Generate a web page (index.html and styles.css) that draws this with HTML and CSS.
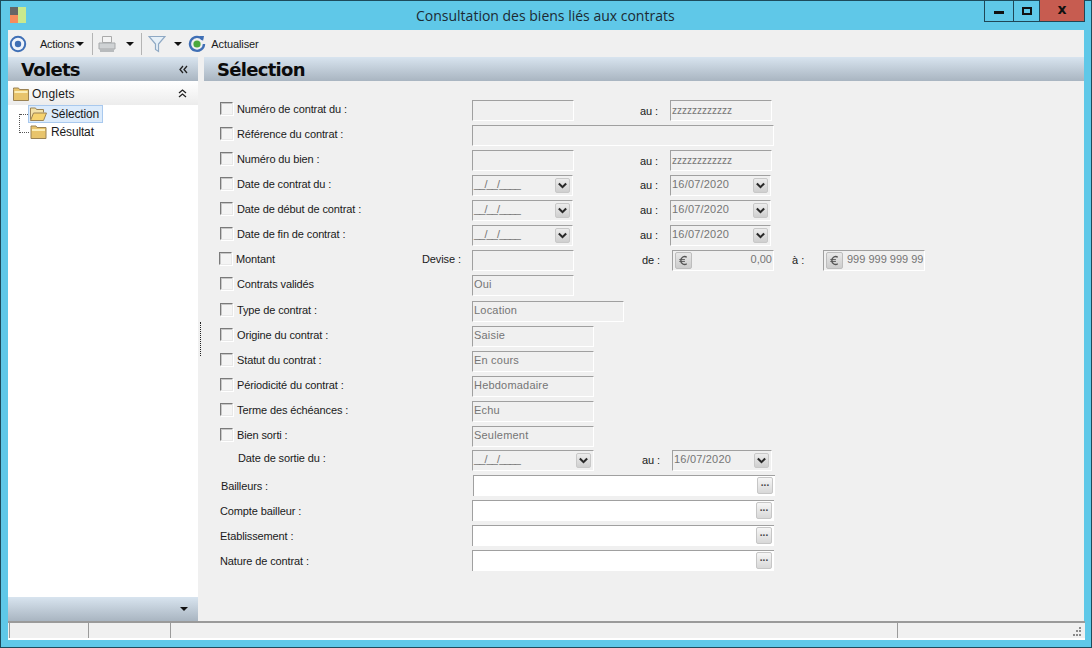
FILE: index.html
```html
<!DOCTYPE html>
<html lang="fr">
<head>
<meta charset="utf-8">
<title>Consultation des biens liés aux contrats</title>
<link rel="stylesheet" href="styles.css">
</head>
<body>
<svg class="defs" width="0" height="0">
  <symbol id="chev" viewBox="0 0 16 16"><path d="M3.500 5.500L8 10l4.500-4.500" fill="none" stroke="#2a2a2a" stroke-width="2.600"/></symbol>
  <symbol id="euro" viewBox="0 0 16 16"><path d="M11.500 4.500A4 4 0 0 0 5.200 8a4 4 0 0 0 6.300 3.500" fill="none" stroke="#555" stroke-width="1.500"/><path d="M3.500 7h6M3.500 9h6" stroke="#555"/></symbol>
  <symbol id="folder" viewBox="0 0 16 14"><path d="M.5 2.500V1h5l1 1.500h9v11H.5z" fill="#e8c46c" stroke="#9a8254"/><path d="M1.500 4h13v2h-13z" fill="#fbeeb8"/></symbol>
  <symbol id="folder-open" viewBox="0 0 17 14"><path d="M.5 12.500V1h5l1 1.500h7v3" fill="#f3e2a8" stroke="#9a8254"/><path d="M.5 13.500l3-7.500h13l-3 7.500z" fill="#f6d36f" stroke="#9a8254"/></symbol>
</svg>
<div class="window">
  <header class="titlebar">
    <div class="appicon"><span class="ic-grey"></span><span class="ic-orange"></span><span class="ic-green"></span></div>
    <div class="title">Consultation des biens liés aux contrats</div>
    <div class="winbtns">
      <div class="winbtn min"><i></i></div>
      <div class="winbtn max"><i></i></div>
      <div class="winbtn close">x</div>
    </div>
  </header>
  <div class="client">
    <div class="toolbar">
      <svg class="tb-target" width="18" height="18" viewBox="0 0 18 18"><circle cx="9" cy="9" r="7.200" fill="#eef3fb" stroke="#3f6fb5" stroke-width="2"/><circle cx="9" cy="9" r="3.200" fill="#3f6fb5"/></svg>
      <span class="tb-text actions">Actions</span><span class="arrow arrow-a"></span>
      <span class="sep sep-a"></span>
      <svg class="tb-print" width="18" height="18" viewBox="0 0 18 18"><path d="M4.500 1.500h9v6h-9z" fill="#f4f4f4" stroke="#aaa"/><path d="M1 8h16v6H1z" fill="#cfd2d4" stroke="#a6a9ab"/><path d="M2 14h14v3H2z" fill="#b8bbbd"/></svg>
      <span class="arrow arrow-b"></span>
      <span class="sep sep-b"></span>
      <svg class="tb-filter" width="18" height="18" viewBox="0 0 18 18"><path d="M1 1.500h16l-6.500 7.500v7.500l-3-2V9z" fill="#e6f0f8" stroke="#8fa9c4" stroke-width="1.200"/></svg>
      <span class="arrow arrow-c"></span>
      <svg class="tb-refresh" width="18" height="18" viewBox="0 0 18 18"><path d="M14.500 4.500A7 7 0 1 0 16 9" fill="none" stroke="#3f6fb5" stroke-width="2.400"/><path d="M11 1l5 0-1 5z" fill="#3f6fb5"/><circle cx="9" cy="9" r="3.600" fill="#4aa83c"/></svg>
      <span class="tb-text refresh">Actualiser</span>
    </div>
    <div class="main">
      <aside class="side">
        <div class="side-head"><span class="h-title">Volets</span><svg class="dbl" width="9" height="9" viewBox="0 0 9 9"><path d="M4 1L1 4.500 4 8M8 1L5 4.500 8 8" fill="none" stroke="#222" stroke-width="1.300"/></svg></div>
        <div class="onglets">
          <svg class="fold-o" width="16" height="14"><use href="#folder"/></svg>
          <span class="on-label">Onglets</span>
          <svg class="dbl-up" width="9" height="9" viewBox="0 0 9 9"><path d="M1 4l3.500-3L8 4M1 8l3.500-3L8 8" fill="none" stroke="#222" stroke-width="1.300"/></svg>
        </div>
        <div class="tree">
          <div class="tree-lines"></div>
          <div class="tree-item selected"><svg width="17" height="14"><use href="#folder-open"/></svg><span>Sélection</span></div>
          <div class="tree-item second"><svg width="17" height="14"><use href="#folder"/></svg><span>Résultat</span></div>
        </div>
        <div class="side-foot"><span class="foot-arrow"></span></div>
      </aside>
      <div class="splitter"><span class="grip"></span></div>
      <section class="content">
        <div class="c-head"><span class="h-title">Sélection</span></div>
        <form class="form">
          <div class="row"><span class="cb"></span><label class="lbl">Numéro de contrat du :</label><span class="f w102"></span><span class="au">au :</span><span class="f w102 val tiny">zzzzzzzzzzzz</span></div>
          <div class="row"><span class="cb"></span><label class="lbl">Référence du contrat :</label><span class="f w302"></span></div>
          <div class="row"><span class="cb"></span><label class="lbl">Numéro du bien :</label><span class="f w102"></span><span class="au">au :</span><span class="f w102 val tiny">zzzzzzzzzzzz</span></div>
          <div class="row"><span class="cb"></span><label class="lbl">Date de contrat du :</label><span class="f w101 val"><span class="mask">__/__/____</span><svg class="dd"><use href="#chev"/></svg></span><span class="au">au :</span><span class="f w101 val">16/07/2020<svg class="dd"><use href="#chev"/></svg></span></div>
          <div class="row"><span class="cb"></span><label class="lbl">Date de début de contrat :</label><span class="f w101 val"><span class="mask">__/__/____</span><svg class="dd"><use href="#chev"/></svg></span><span class="au">au :</span><span class="f w101 val">16/07/2020<svg class="dd"><use href="#chev"/></svg></span></div>
          <div class="row"><span class="cb"></span><label class="lbl">Date de fin de contrat :</label><span class="f w101 val"><span class="mask">__/__/____</span><svg class="dd"><use href="#chev"/></svg></span><span class="au">au :</span><span class="f w101 val">16/07/2020<svg class="dd"><use href="#chev"/></svg></span></div>
          <div class="row"><span class="cb cb-m"></span><label class="lbl short">Montant</label><label class="devise">Devise :</label><span class="f w102"></span><span class="au de">de :</span><span class="f w102 val money"><svg class="eu"><use href="#euro"/></svg><span class="amt">0,00</span></span><span class="a-lbl">à :</span><span class="f w102 val money"><svg class="eu"><use href="#euro"/></svg><span class="amt">999 999 999 99</span></span></div>
          <div class="row"><span class="cb"></span><label class="lbl">Contrats validés</label><span class="f w102 val">Oui</span></div>
          <div class="row gap"><span class="cb"></span><label class="lbl">Type de contrat :</label><span class="f w152 val">Location</span></div>
          <div class="row"><span class="cb"></span><label class="lbl">Origine du contrat :</label><span class="f w122 val">Saisie</span></div>
          <div class="row"><span class="cb"></span><label class="lbl">Statut du contrat :</label><span class="f w122 val">En cours</span></div>
          <div class="row"><span class="cb"></span><label class="lbl">Périodicité du contrat :</label><span class="f w122 val">Hebdomadaire</span></div>
          <div class="row"><span class="cb"></span><label class="lbl">Terme des échéances :</label><span class="f w122 val">Echu</span></div>
          <div class="row"><span class="cb"></span><label class="lbl">Bien sorti :</label><span class="f w122 val">Seulement</span></div>
          <div class="row tight"><label class="lbl nocb">Date de sortie du :</label><span class="f w122 val"><span class="mask">__/__/____</span><svg class="dd"><use href="#chev"/></svg></span><span class="au sortie">au :</span><span class="f w100 val">16/07/2020<svg class="dd"><use href="#chev"/></svg></span></div>
          <div class="row"><label class="lbl plain first">Bailleurs :</label><span class="f w302 on"><span class="dots">...</span></span></div>
          <div class="row"><label class="lbl plain">Compte bailleur :</label><span class="f w302 on"><span class="dots">...</span></span></div>
          <div class="row"><label class="lbl plain">Etablissement :</label><span class="f w302 on"><span class="dots">...</span></span></div>
          <div class="row"><label class="lbl plain">Nature de contrat :</label><span class="f w302 on"><span class="dots">...</span></span></div>
        </form>
      </section>
    </div>
    <footer class="status">
      <span class="cell c1"></span><span class="cell c2"></span><span class="cell c3"></span><span class="cell c4"><svg class="resize" width="12" height="12" viewBox="0 0 12 12"><path d="M9 1h2v2H9zM6 4h2v2H6zM9 4h2v2H9zM3 8h2v2H3zM6 8h2v2H6zM9 8h2v2H9z" fill="#8a8a8a"/></svg></span>
    </footer>
  </div>
</div>
</body>
</html>
```
FILE: styles.css
```css
* { box-sizing: border-box; }
html, body { margin: 0; padding: 0; }
body { width: 1092px; height: 648px; overflow: hidden; font-family: "Liberation Sans", Arial, sans-serif; font-size: 11px; color: #1a1a1a; background: #5fc8e8; }
.defs { position: absolute; }
.window { width: 1092px; height: 648px; border: 1px solid #1d4b5c; background: #5fc8e8; display: flex; flex-direction: column; }
.titlebar { height: 29px; display: flex; position: relative; flex: none; }
.appicon { position: relative; width: 16px; height: 16px; margin: 6px 0 0 9px; }
.appicon span { position: absolute; display: block; }
.ic-grey { left: 0; top: 0; width: 8px; height: 8px; background: #666; }
.ic-orange { left: 0; top: 8px; width: 8px; height: 8px; background: #f58c5c; }
.ic-green { left: 8px; top: 0; width: 8px; height: 16px; background: #c9e98d; }
.title { position: absolute; left: 415px; top: 6px; font-family: "Open Sans", sans-serif; font-size: 14px; line-height: 18px; color: #1c2a33; white-space: nowrap; }
.winbtns { position: absolute; right: 6px; top: -1px; height: 22px; display: flex; border: 1px solid #1f4656; border-top: 0; }
.winbtn { display: flex; align-items: center; justify-content: center; border-left: 1px solid #1f4656; }
.min { width: 28px; border-left: 0; }
.min i { display: block; width: 10px; height: 3px; background: #111; margin-top: 4px; }
.max { width: 26px; }
.max i { display: block; width: 10px; height: 8px; border: 2px solid #111; }
.close { width: 45px; background: #c75c50; font: bold 14px "DejaVu Sans", sans-serif; color: #111; padding-bottom: 3px; }
.client { margin: 0 7px; width: 1076px; height: 610px; background: #f0f0f0; display: flex; flex-direction: column; }
.toolbar { height: 27px; flex: none; position: relative; display: flex; align-items: center; background: #f0f0f0; }
.tb-target { margin-left: 1px; }
.tb-text { color: #1a1a1a; font-size: 11px; }
.actions { margin-left: 13px; letter-spacing: -.25px; }
.arrow { display: block; width: 0; height: 0; border: 4px solid transparent; border-top-color: #111; border-bottom: 0; }
.arrow-a { margin-left: 2px; }
.sep { display: block; width: 1px; height: 22px; background: #b4b4b4; }
.sep-a { margin-left: 8px; }
.tb-print { margin-left: 5px; }
.arrow-b { margin-left: 10px; }
.sep-b { margin-left: 7px; }
.tb-filter { margin-left: 6px; }
.arrow-c { margin-left: 8px; }
.tb-refresh { margin-left: 6px; }
.refresh { margin-left: 5px; letter-spacing: -.1px; }
.main { flex: 1; display: flex; min-height: 0; }
.side { width: 190px; background: #fff; display: flex; flex-direction: column; }
.side-head, .c-head { height: 24px; flex: none; background: linear-gradient(#d8e4ef, #a9b5c1); display: flex; align-items: center; }
.h-title { font: bold 18px/24px "DejaVu Sans", sans-serif; color: #0b0b0b; letter-spacing: -.7px; padding-top: 1px; }
.side-head .h-title { margin-left: 13px; }
.dbl { margin-left: auto; margin-right: 10px; }
.onglets { height: 24px; flex: none; display: flex; align-items: center; padding-top: 1px; background: linear-gradient(#fff, #ececec); }
.fold-o { margin-left: 5px; }
.on-label { margin-left: 3px; font-size: 12px; letter-spacing: .2px; }
.dbl-up { margin-left: auto; margin-right: 11px; }
.tree { flex: 1; position: relative; padding-left: 20px; background: #fff; }
.tree-lines { position: absolute; left: 11px; top: 9px; width: 10px; height: 19px; border-left: 1px dotted #555; border-bottom: 1px dotted #555; }
.tree-lines::before { content: ""; position: absolute; left: 0; top: 0; width: 10px; border-top: 1px dotted #555; }
.tree-item { position: relative; display: flex; align-items: center; height: 18px; width: 75px; padding-left: 2px; font-size: 12px; letter-spacing: -.15px; }
.tree-item span { margin-left: 4px; }
.selected { background: #dcebfb; border: 1px solid #a9c9ee; padding-left: 1px; height: 18px; }
.side-foot { height: 24px; flex: none; background: linear-gradient(#d8e4ef, #a9b5c1); display: flex; align-items: center; justify-content: flex-end; }
.foot-arrow { display: block; width: 0; height: 0; border: 4px solid transparent; border-top: 4px solid #111; border-bottom: 0; margin-right: 10px; }
.splitter { width: 6px; display: flex; align-items: center; }
.grip { display: block; width: 1px; height: 34px; margin-left: 2px; border-left: 1px dotted #222; }
.content { flex: 1; display: flex; flex-direction: column; min-width: 0; }
.c-head .h-title { margin-left: 13px; }
.form { padding: 19px 0 0 16px; }
.row { height: 25px; display: flex; align-items: flex-start; position: relative; }
.gap { margin-top: 1px; }
.tight { margin-top: -1px; }
.cb { width: 13px; height: 13px; flex: none; margin-top: 2px; background: #f4f4f4; border: 1px solid; border-color: #7a7a7a #e8e8e8 #e8e8e8 #7a7a7a; box-shadow: inset 1px 1px 0 #c8c8c8, 1px 1px 0 #fff; }
.cb-m { margin-left: -1px; }
.lbl { width: 239px; flex: none; padding-left: 4px; line-height: 18px; white-space: nowrap; letter-spacing: -.12px; }
.lbl.short { width: 65px; padding-left: 4px; }
.devise { width: 175px; flex: none; line-height: 18px; padding-left: 125px; white-space: nowrap; letter-spacing: -.1px; }
.lbl.nocb { width: 252px; padding-left: 18px; margin-top: -1px; }
.lbl.plain { width: 252px; padding-left: 0; margin-top: 2px; }
.lbl.first { padding-left: 1px; }
.f { display: block; position: relative; flex: none; height: 21px; background: #f0f0f0; border: 1px solid; border-color: #a0a0a0 #fff #fff #a0a0a0; color: #757575; padding-left: 1px; line-height: 17px; white-space: nowrap; overflow: hidden; }
.w100 { width: 100px; }
.w101 { width: 101px; }
.w102 { width: 102px; }
.w122 { width: 122px; }
.w152 { width: 152px; }
.w302 { width: 302px; }
.val { font-size: 11px; letter-spacing: .2px; }
.tiny { font-size: 10px; letter-spacing: 0; padding-top: 1px; }
.mask { letter-spacing: -.9px; padding-top: 1px; }
.au { width: 30px; flex: none; margin-left: 66px; line-height: 21px; letter-spacing: -.1px; }
.w102 + .au { margin-top: 1px; }
.w101 + .au { margin-left: 67px; }
.w102 + .au.de { margin-left: 68px; margin-top: 0; }
.au.sortie { margin-left: 48px; margin-top: 0; }
.a-lbl { width: 31px; margin-left: 18px; flex: none; line-height: 21px; }
.dd { position: absolute; right: 2px; top: 2px; width: 15px; height: 15px; background: linear-gradient(#ececec, #cfcfcf); border: 1px solid #c8c8c8; border-radius: 2px; }
.money { padding-left: 23px; text-align: right; padding-right: 1px; letter-spacing: 0; }
.eu { position: absolute; left: 2px; top: 1px; width: 17px; height: 17px; background: linear-gradient(#e8e8e8, #cccccc); border: 1px solid #bdbdbd; border-radius: 2px; }
.amt { display: block; }
.on { background: #fff; border-right: 0; border-bottom: 0; }
.first + .on { margin-left: 1px; }
.dots { position: absolute; right: 2px; top: 1px; width: 16px; height: 17px; background: linear-gradient(#f6f6f6, #d8d8d8); border: 1px solid #c6c6c6; border-radius: 2px; text-align: center; font: bold 10px/10px "Liberation Sans", sans-serif; color: #444; }
.status { height: 19px; flex: none; margin: 0 -1px 0 0; display: flex; border-top: 2px solid #9a9a9a; border-bottom: 2px solid #fff; background: #f0f0f0; }
.cell { display: block; border-left: 1px solid #9a9a9a; position: relative; }
.c1 { width: 79px; margin-left: 1px; }
.c2 { width: 82px; }
.c3 { width: 727px; }
.c4 { flex: 1; }
.resize { position: absolute; right: 3px; bottom: 0; }
```
